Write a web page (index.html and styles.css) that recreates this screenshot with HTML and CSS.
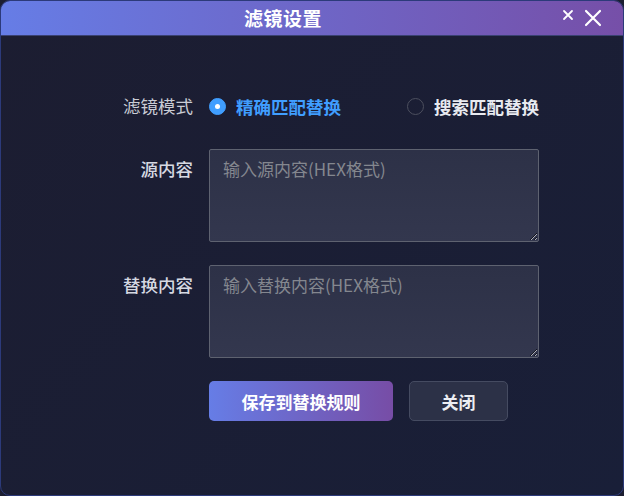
FILE: index.html
```html
<!DOCTYPE html>
<html lang="zh">
<head>
<meta charset="utf-8">
<link rel="stylesheet" href="styles.css">
</head>
<body>
<div class="window">
  <div class="titlebar">
    <div class="title">滤镜设置</div>
    <div class="tb-buttons">
      <svg class="ico-small" width="12" height="12" viewBox="0 0 12 12"><path d="M2 2L10 10M10 2L2 10" stroke="#fff" stroke-width="1.8" stroke-linecap="round"/></svg>
      <svg class="ico-big" width="18" height="18" viewBox="0 0 18 18"><path d="M2 2L16 16M16 2L2 16" stroke="#fff" stroke-width="2.2" stroke-linecap="round"/></svg>
    </div>
  </div>
  <div class="content">
    <div class="form">
      <div class="label mode-label">滤镜模式</div>
      <div class="options">
        <label class="option checked"><span class="radio"></span><span class="opt-text">精确匹配替换</span></label>
        <label class="option"><span class="radio"></span><span class="opt-text">搜索匹配替换</span></label>
      </div>

      <div class="label">源内容</div>
      <textarea class="field" placeholder="输入源内容(HEX格式)"></textarea>

      <div class="label">替换内容</div>
      <textarea class="field" placeholder="输入替换内容(HEX格式)"></textarea>

      <div></div>
      <div class="actions">
        <button class="btn primary">保存到替换规则</button>
        <button class="btn secondary">关闭</button>
      </div>
    </div>
  </div>
</div>
</body>
</html>
```
FILE: styles.css
```css
html, body {
  margin: 0;
  padding: 0;
  background: #1c1e31;
}
body {
  font-family: "Noto Sans CJK SC", "Noto Sans", sans-serif;
}
.window {
  width: 624px;
  height: 496px;
  box-sizing: border-box;
  border: 1px solid #2c3a7a;
  border-radius: 10px;
  overflow: hidden;
  background: linear-gradient(135deg, #1c1d31 0%, #191f38 100%);
  display: flex;
  flex-direction: column;
}
.titlebar {
  height: 35px;
  flex: none;
  background: linear-gradient(90deg, #667de6 0%, #764fa8 100%);
  border-bottom: 1px solid #3a4272;
  display: flex;
  align-items: center;
  margin: -1px -1px 0 -1px;
}
.title {
  flex: 1;
  text-align: center;
  color: #fff;
  font-weight: 700;
  font-size: 19px;
  line-height: 35px;
  letter-spacing: 0.5px;
  padding-left: 4px;
}
.tb-buttons {
  width: 62px;
  display: flex;
  align-items: center;
  gap: 10px;
  flex: none;
}
.ico-small { margin-top: -5px; }
.content {
  flex: 1;
  padding: 50px 0 0 96px;
}
.form {
  display: grid;
  grid-template-columns: 96px 330px;
  column-gap: 16px;
  row-gap: 23px;
  align-items: start;
}
.label {
  text-align: right;
  color: #d6d9e2;
  font-size: 17.5px;
  font-weight: 500;
  line-height: 24px;
  padding-top: 8px;
}
.mode-label {
  font-weight: 400;
  color: #c9ccd5;
}
.options {
  display: flex;
  justify-content: space-between;
  align-items: center;
  height: 40px;
}
.option {
  display: flex;
  align-items: center;
  gap: 10px;
  font-size: 17.5px;
  font-weight: 700;
  color: #e8eaf0;
}
.option.checked { color: #409eff; }
.radio {
  width: 15px;
  height: 15px;
  border-radius: 50%;
  border: 1px solid #4c4f5e;
  box-sizing: content-box;
  display: inline-block;
  position: relative;
}
.option.checked .radio {
  background: #409eff;
  border-color: #409eff;
}
.option.checked .radio::after {
  content: "";
  position: absolute;
  width: 5px;
  height: 5px;
  background: #fff;
  border-radius: 50%;
  left: 5px;
  top: 5px;
}
.field {
  box-sizing: border-box;
  width: 330px;
  height: 93px;
  margin: 0;
  background: linear-gradient(180deg, #2d3147 0%, #33374e 100%);
  border: 1px solid #5e6270;
  border-radius: 2px;
  padding: 8px 13px;
  font-family: "Noto Sans CJK SC", "Noto Sans", sans-serif;
  font-size: 17px;
  line-height: 22px;
  color: #e0e2ea;
  outline: none;
  color-scheme: dark;
}
.field::placeholder { color: #84878f; }
.actions {
  display: flex;
  gap: 16px;
}
.btn {
  height: 40px;
  border-radius: 5px;
  font-family: "Noto Sans CJK SC", "Noto Sans", sans-serif;
  font-size: 17px;
  font-weight: 700;
  color: #fff;
  cursor: pointer;
}
.btn.primary {
  width: 184px;
  border: none;
  background: linear-gradient(90deg, #667de6 0%, #774da6 100%);
}
.btn.secondary {
  width: 99px;
  background: #2c3147;
  border: 1px solid #454b61;
  color: #eceef3;
}
```
